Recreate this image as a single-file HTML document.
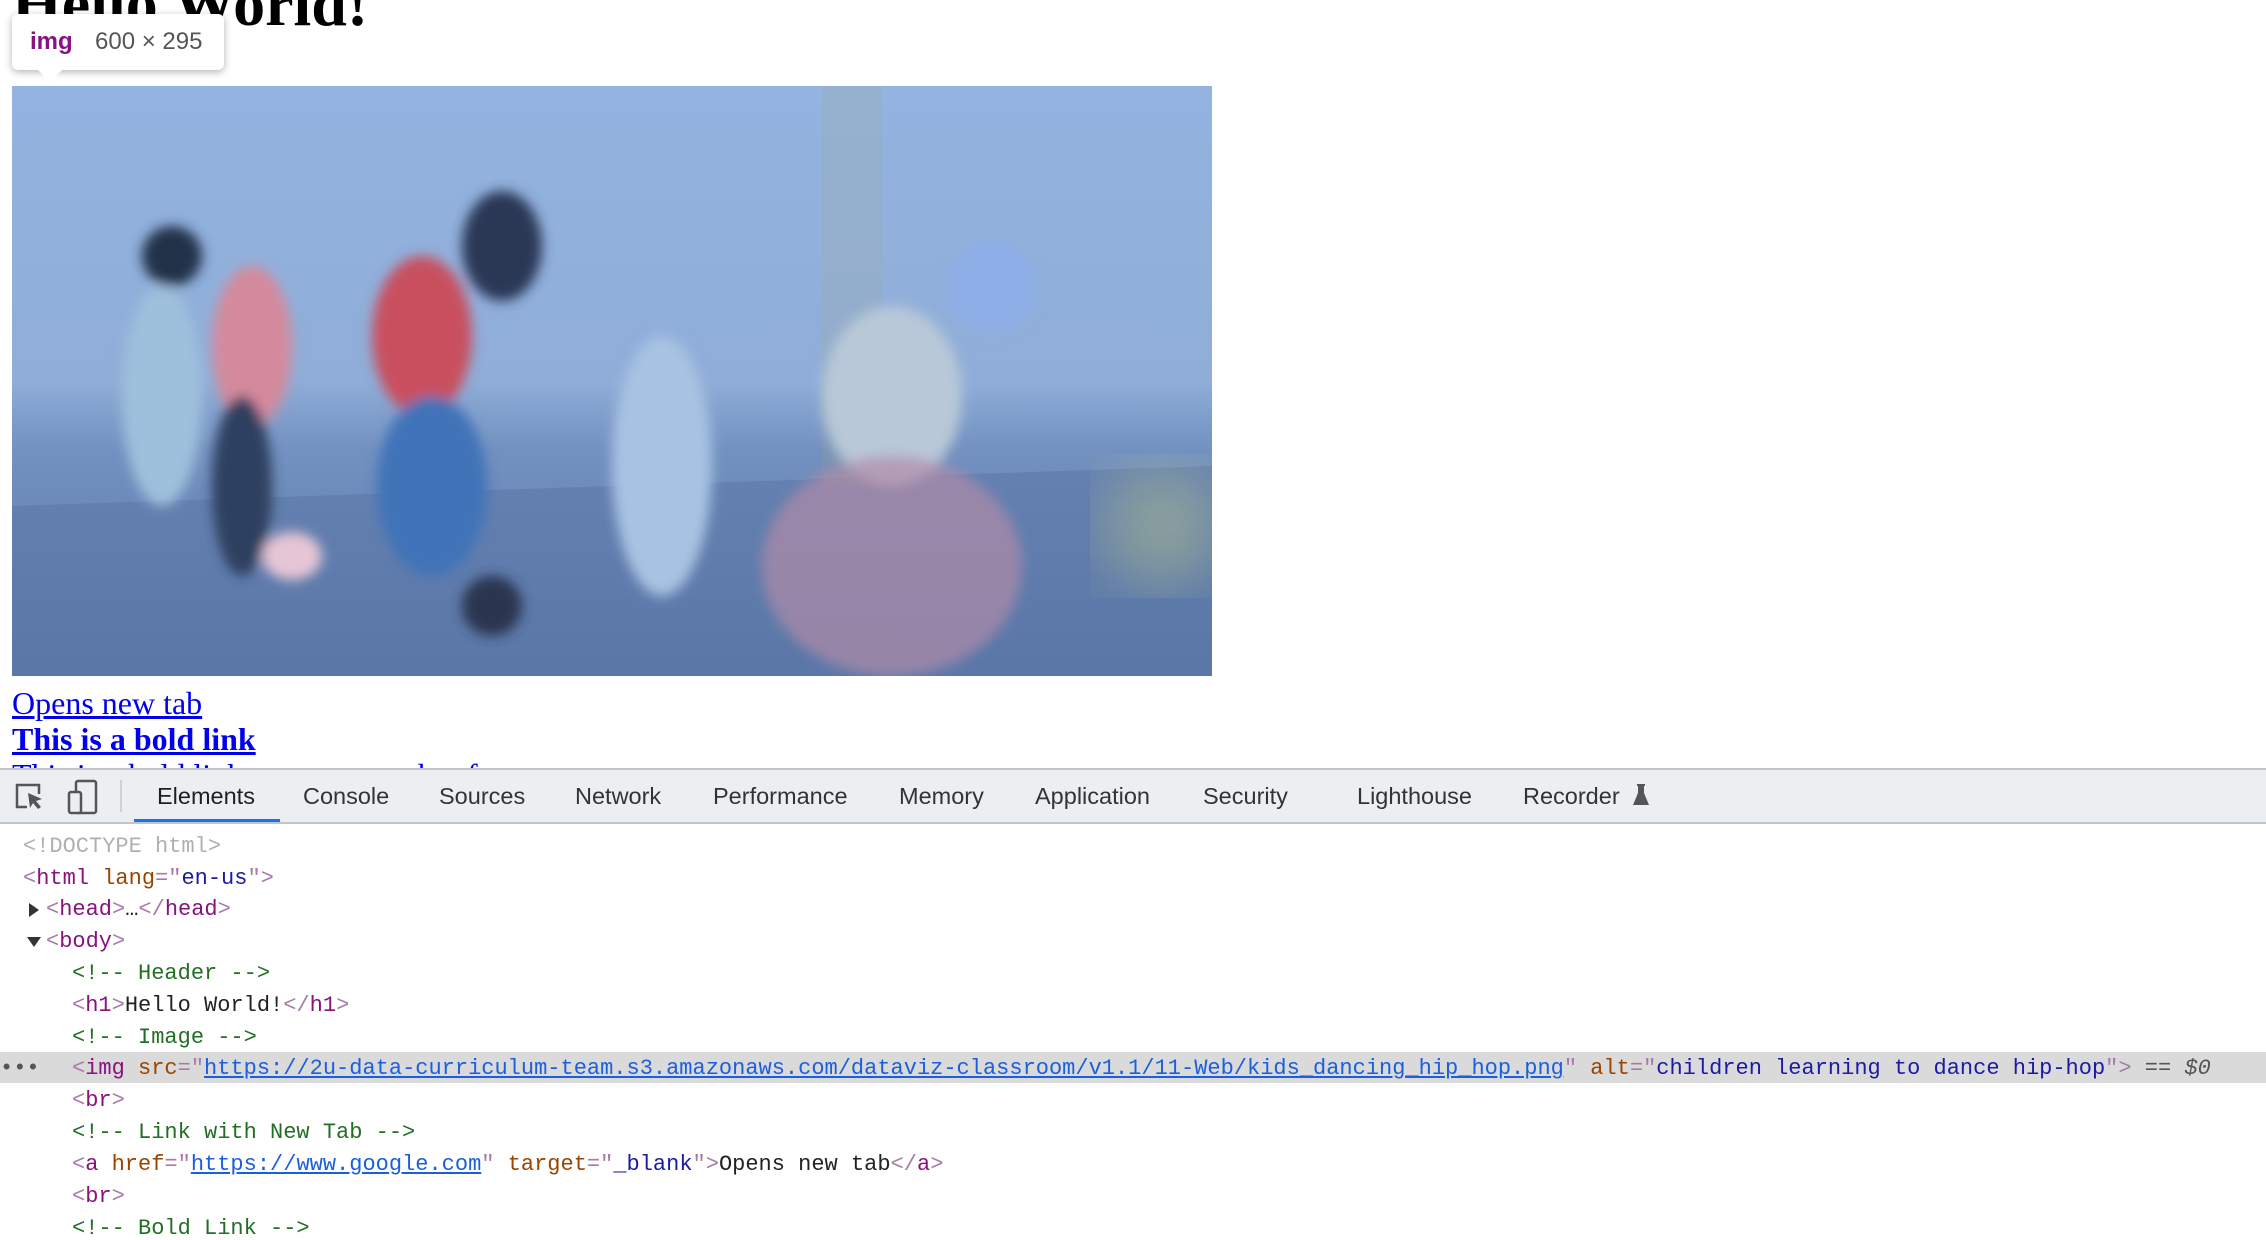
<!DOCTYPE html>
<html><head><meta charset="utf-8"><style>
html,body{margin:0;padding:0;width:2266px;height:1240px;overflow:hidden;background:#fff;position:relative}
.a{position:absolute;white-space:pre}
h1{position:absolute;left:12px;top:-36px;margin:0;font:bold 64px/80px "Liberation Serif",serif;color:#000}
.lk{position:absolute;left:12px;font:32px/36px "Liberation Serif",serif;color:#0000ee;text-decoration:underline}
.tip{position:absolute;left:12px;top:14px;width:212px;height:56px;background:#fff;border-radius:6px;box-shadow:0 2px 8px rgba(0,0,0,.3);font:24px/56px "Liberation Sans",sans-serif}
.tip:after{content:"";position:absolute;left:26px;top:56px;border:12px solid transparent;border-top-color:#fff;border-bottom:0}
.tb{position:absolute;left:0;top:768px;width:2266px;height:52px;background:#eceff1;border-top:2px solid #c3c6c9;border-bottom:2px solid #c3c6c9}
.tab{position:absolute;top:12px;font:23.5px/28px "Liberation Sans",sans-serif;color:#333}
.code{position:absolute;left:0;font:22px/32px "Liberation Mono",monospace;color:#222;white-space:pre}
.t{color:#881280}.b{color:#a67ca6}.n{color:#994500}.v{color:#1a1aa6}.c{color:#236e25}.u{color:#1a5fde;text-decoration:underline}
</style></head><body>
<h1>Hello World!</h1>
<svg class="a" style="left:12px;top:86px" width="1200" height="590" viewBox="0 0 1200 590">
<defs>
<linearGradient id="g" x1="0" y1="0" x2="0" y2="1"><stop offset="0" stop-color="#93b3e0"/><stop offset=".5" stop-color="#8fadd8"/><stop offset=".62" stop-color="#7290c0"/><stop offset="1" stop-color="#5775a6"/></linearGradient>
<filter id="bl"><feGaussianBlur stdDeviation="6"/></filter>
<filter id="bl2"><feGaussianBlur stdDeviation="30"/></filter>
</defs>
<rect width="1200" height="590" fill="url(#g)"/>
<polygon points="0,420 1200,380 1200,590 0,590" fill="#5b78a8" opacity=".6"/>
<rect x="810" y="0" width="60" height="400" fill="#a5a87a" opacity=".15"/>
<g filter="url(#bl)">
<ellipse cx="150" cy="310" rx="40" ry="110" fill="#9fc0dc"/>
<ellipse cx="240" cy="260" rx="40" ry="80" fill="#d48a9c"/>
<ellipse cx="230" cy="400" rx="30" ry="90" fill="#2f3f5e"/>
<ellipse cx="410" cy="250" rx="50" ry="80" fill="#c9505e"/>
<ellipse cx="420" cy="400" rx="55" ry="90" fill="#3f73b8"/>
<ellipse cx="490" cy="160" rx="40" ry="55" fill="#2c3956"/>
<ellipse cx="160" cy="170" rx="30" ry="30" fill="#243048"/>
<ellipse cx="650" cy="380" rx="50" ry="130" fill="#a7c2e2"/>
<ellipse cx="880" cy="310" rx="70" ry="90" fill="#b8c8d8"/>
<ellipse cx="980" cy="200" rx="45" ry="45" fill="#8eaee8"/>
<ellipse cx="880" cy="480" rx="130" ry="110" fill="#b08aa8" opacity=".7"/>
<ellipse cx="480" cy="520" rx="30" ry="30" fill="#2a3550"/>
<ellipse cx="280" cy="470" rx="30" ry="24" fill="#e6c6d6"/>
</g>
<circle cx="1150" cy="440" r="60" fill="#b6c28a" opacity=".5" filter="url(#bl2)"/>
</svg>
<div class="tip"><span class="a" style="left:18px;color:#881280;font-weight:bold">img</span><span class="a" style="left:83px;color:#555">600 × 295</span></div>
<div class="lk" style="top:685px">Opens new tab</div>
<div class="lk" style="top:721px;font-weight:bold">This is a bold link</div>
<div class="lk" style="top:757px">This is a bold link opens new tab ref</div>
<div class="tb">
<svg class="a" style="left:14px;top:12px" width="32" height="30" viewBox="0 0 32 30"><path d="M13 25H3V3h22v9" fill="none" stroke="#555" stroke-width="2.5"/><path d="M14 11l14 6-6 2 5 6-3 2-5-6-3 5z" fill="#555"/></svg>
<svg class="a" style="left:66px;top:8px" width="34" height="38" viewBox="0 0 34 38"><rect x="10" y="3" width="20" height="32" rx="2" fill="none" stroke="#555" stroke-width="2.5"/><rect x="3" y="14" width="12" height="21" rx="2" fill="#eceff1" stroke="#555" stroke-width="2.5"/></svg>
<div class="a" style="left:120px;top:10px;width:2px;height:32px;background:#cfd2d5"></div>
<div class="tab" style="left:157px;color:#1f1f1f">Elements</div>
<div class="a" style="left:134px;top:49px;width:146px;height:3px;background:#1a73e8"></div>
<div class="tab" style="left:303px">Console</div>
<div class="tab" style="left:439px">Sources</div>
<div class="tab" style="left:575px">Network</div>
<div class="tab" style="left:713px">Performance</div>
<div class="tab" style="left:899px">Memory</div>
<div class="tab" style="left:1035px">Application</div>
<div class="tab" style="left:1203px">Security</div>
<div class="tab" style="left:1357px">Lighthouse</div>
<div class="tab" style="left:1523px">Recorder</div>
<svg class="a" style="left:1632px;top:13px" width="18" height="24" viewBox="0 0 18 24"><path d="M5 1h8v2h-1v7l5 12H1l5-12V3H5z" fill="#555"/></svg>
</div>
<div class="a" style="left:0;top:1052px;width:2266px;height:31px;background:#dadada"></div>
<div class="code" style="top:831px;left:23px;color:#b0b0b0">&lt;!DOCTYPE html&gt;</div>
<div class="code" style="top:863px;left:23px"><span class="b">&lt;</span><span class="t">html</span> <span class="n">lang</span><span class="b">="</span><span class="v">en-us</span><span class="b">"&gt;</span></div>
<div class="code" style="top:894px;left:46px"><span class="b">&lt;</span><span class="t">head</span><span class="b">&gt;</span>…<span class="b">&lt;/</span><span class="t">head</span><span class="b">&gt;</span></div>
<div class="a" style="left:29px;top:903px;border-left:10px solid #333;border-top:7px solid transparent;border-bottom:7px solid transparent"></div>
<div class="code" style="top:926px;left:46px"><span class="b">&lt;</span><span class="t">body</span><span class="b">&gt;</span></div>
<div class="a" style="left:27px;top:937px;border-top:10px solid #333;border-left:7px solid transparent;border-right:7px solid transparent"></div>
<div class="code c" style="top:958px;left:72px">&lt;!-- Header --&gt;</div>
<div class="code" style="top:990px;left:72px"><span class="b">&lt;</span><span class="t">h1</span><span class="b">&gt;</span>Hello World!<span class="b">&lt;/</span><span class="t">h1</span><span class="b">&gt;</span></div>
<div class="code c" style="top:1022px;left:72px">&lt;!-- Image --&gt;</div>
<div class="code" style="top:1053px;left:0;color:#555">•••</div>
<div class="code" style="top:1053px;left:72px"><span class="b">&lt;</span><span class="t">img</span> <span class="n">src</span><span class="b">="</span><span class="u">https://2u-data-curriculum-team.s3.amazonaws.com/dataviz-classroom/v1.1/11-Web/kids_dancing_hip_hop.png</span><span class="b">"</span> <span class="n">alt</span><span class="b">="</span><span class="v">children learning to dance hip-hop</span><span class="b">"&gt;</span><span style="color:#555"> == <i>$0</i></span></div>
<div class="code" style="top:1085px;left:72px"><span class="b">&lt;</span><span class="t">br</span><span class="b">&gt;</span></div>
<div class="code c" style="top:1117px;left:72px">&lt;!-- Link with New Tab --&gt;</div>
<div class="code" style="top:1149px;left:72px"><span class="b">&lt;</span><span class="t">a</span> <span class="n">href</span><span class="b">="</span><span class="u">https://www.google.com</span><span class="b">"</span> <span class="n">target</span><span class="b">="</span><span class="v">_blank</span><span class="b">"&gt;</span>Opens new tab<span class="b">&lt;/</span><span class="t">a</span><span class="b">&gt;</span></div>
<div class="code" style="top:1181px;left:72px"><span class="b">&lt;</span><span class="t">br</span><span class="b">&gt;</span></div>
<div class="code c" style="top:1213px;left:72px">&lt;!-- Bold Link --&gt;</div>
</body></html>
